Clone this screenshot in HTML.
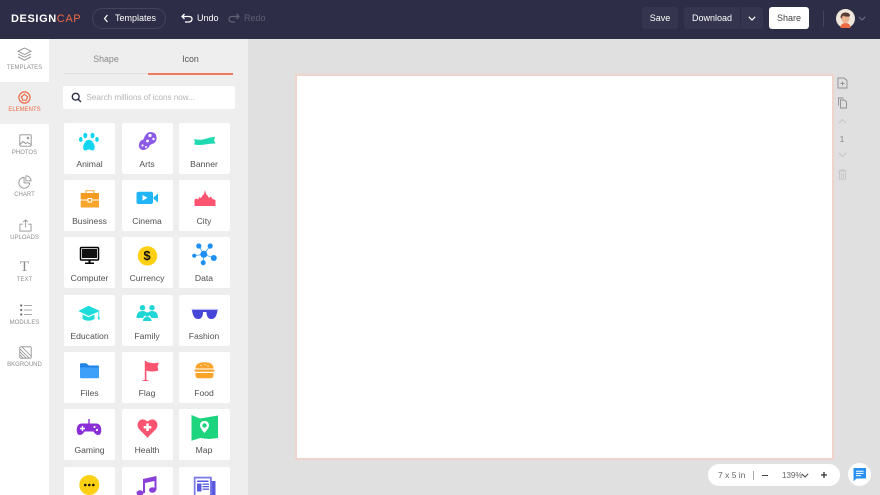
<!DOCTYPE html>
<html><head><meta charset="utf-8"><style>
*{box-sizing:border-box}
html,body{margin:0;padding:0;width:880px;height:495px;overflow:hidden;background:#e0e0e0;font-family:"Liberation Sans",sans-serif}
#root{position:absolute;left:0;top:0;width:880px;height:495px;overflow:hidden;background:#e0e0e0}
.a{position:absolute}
.t{position:absolute;white-space:nowrap;text-align:center}
#top{left:0;top:0;width:880px;height:39px;background:#2d2d47}
.btn{position:absolute;top:7px;height:22px;background:#35354f;border-radius:3px;color:#fff;font-size:9px;line-height:22px;text-align:center}
.nav{position:absolute;left:0;width:49px;text-align:center;font-size:6px;line-height:7px;color:#8f8f8f}
.tile{position:absolute;width:51px;height:51px;background:#fff;border-radius:2px}
.tile span{position:absolute;left:0;right:0;top:36px;text-align:center;font-size:8.6px;color:#505050;line-height:11px}
.tile svg{position:absolute;left:8px;top:6px}
#list{position:absolute;left:0;top:0;width:248px;height:495px;overflow:hidden}
</style></head><body><div id="root">
<div class="a" id="top"></div>
<div class="t" style="left:11px;top:11px;font-size:11px;font-weight:bold;letter-spacing:.6px;color:#fff;line-height:16px">DESIGN<span style="color:#ee6a45;font-weight:normal">CAP</span></div>
<div class="a" style="left:92px;top:8px;width:74px;height:21px;border:1px solid #43435c;border-radius:11px"></div>
<svg class="a" style="left:103px;top:14px" width="6" height="9" viewBox="0 0 6 9"><path d="M4.5 1L1.5 4.5L4.5 8" fill="none" stroke="#fff" stroke-width="1.2"/></svg>
<div class="t" style="left:115px;top:13px;font-size:9px;color:#fff;line-height:11px">Templates</div>
<svg class="a" style="left:181px;top:13px" width="12" height="11" viewBox="0 0 12 11"><path d="M1 3.5H8Q11 3.5 11 6T8 9H4M3.5 1L1 3.5L3.5 6" fill="none" stroke="#fff" stroke-width="1.3"/></svg>
<div class="t" style="left:197px;top:13px;font-size:9px;color:#fff;line-height:11px">Undo</div>
<svg class="a" style="left:228px;top:13px" width="12" height="11" viewBox="0 0 12 11"><path d="M11 3.5H4Q1 3.5 1 6T4 9H7M8.5 1L11 3.5L8.5 6" fill="none" stroke="#5f5f74" stroke-width="1.3"/></svg>
<div class="t" style="left:244px;top:13px;font-size:9px;color:#5f5f74;line-height:11px">Redo</div>
<div class="btn" style="left:642px;width:36px">Save</div>
<div class="btn" style="left:684px;width:56px;border-radius:3px 0 0 3px">Download</div>
<div class="btn" style="left:741px;width:22px;border-radius:0 3px 3px 0"></div>
<svg class="a" style="left:748px;top:16px" width="8" height="5" viewBox="0 0 8 5"><path d="M.8 .8L4 4L7.2 .8" fill="none" stroke="#fff" stroke-width="1.2"/></svg>
<div class="btn" style="left:769px;width:40px;background:#fff;color:#444">Share</div>
<div class="a" style="left:823px;top:11px;width:1px;height:16px;background:#45455d"></div>
<svg class="a" style="left:836px;top:9px" width="19" height="19" viewBox="0 0 19 19"><circle cx="9.5" cy="9.5" r="9.5" fill="#efe6dc"/><path d="M4.5 19Q4.5 14 9.5 14T14.5 19Z" fill="#ee6a45"/><circle cx="9.5" cy="10" r="4" fill="#e9b48f"/><path d="M4.5 8Q5 3.5 9.5 3.5T14 7L13.5 7.5Q9 8 7 6.5Q6 8 5.5 10Z" fill="#5a3d32"/></svg>
<svg class="a" style="left:858px;top:16px" width="8" height="5" viewBox="0 0 8 5"><path d="M.8 .8L4 4L7.2 .8" fill="none" stroke="#74748a" stroke-width="1"/></svg>

<div class="a" style="left:0;top:39px;width:49px;height:456px;background:#fff"></div>
<div class="a" style="left:49px;top:39px;width:199px;height:456px;background:#eee"></div>
<div class="a" style="left:0;top:82px;width:50px;height:42px;background:#eee"></div>

<svg class="a" style="left:17px;top:47px" width="15" height="15" viewBox="0 0 15 15" fill="none" stroke="#8f8f8f" stroke-width=".9"><path d="M7.5 1L14 4.3L7.5 7.5L1 4.3Z"/><path d="M1 7L7.5 10.3L14 7"/><path d="M1 9.8L7.5 13.2L14 9.8"/></svg>
<div class="nav" style="top:64.5px">TEMPLATES</div>
<svg class="a" style="left:18px;top:91px" width="13" height="13" viewBox="0 0 13 13" fill="none" stroke="#ee6a45" stroke-width="1.2"><circle cx="6.5" cy="6.5" r="5.6"/><path d="M6.5 3.3L9.5 5.7L8.4 9.2H4.6L3.5 5.7Z"/></svg>
<div class="nav" style="top:107px;color:#ee6a45">ELEMENTS</div>
<svg class="a" style="left:18.5px;top:133.5px" width="13" height="13" viewBox="0 0 13 13" fill="none" stroke="#8f8f8f" stroke-width=".9"><rect x=".8" y=".8" width="11.4" height="11.4" rx="1"/><path d="M1 10.5L4 7.5L6.5 9.5L8.5 8.5L12 10.5"/><circle cx="9" cy="4" r=".8"/></svg>
<div class="nav" style="top:149.5px">PHOTOS</div>
<svg class="a" style="left:18px;top:174.5px" width="14" height="14" viewBox="0 0 15 15" fill="none" stroke="#8f8f8f" stroke-width=".9"><path d="M6.5 2.5A5.8 5.8 0 1 0 12.5 8.5H6.5Z"/><path d="M8.5 .8A5.5 5.5 0 0 1 14 6.3H8.5Z"/></svg>
<div class="nav" style="top:191.5px">CHART</div>
<svg class="a" style="left:19px;top:218.5px" width="13" height="13" viewBox="0 0 14 14" fill="none" stroke="#8f8f8f" stroke-width=".9"><path d="M4.5 5.5H1V13H13V5.5H9.5"/><path d="M7 9V1M4.5 3.3L7 1L9.5 3.3"/></svg>
<div class="nav" style="top:234.5px">UPLOADS</div>
<div class="a" style="left:0;width:49px;top:259px;text-align:center;font-family:'Liberation Serif',serif;font-size:15px;line-height:17px;color:#8a8a8a">T</div>
<div class="nav" style="top:276.5px">TEXT</div>
<svg class="a" style="left:19.5px;top:304px" width="12" height="12" viewBox="0 0 12 12" stroke="#8f8f8f" stroke-width=".8"><path d="M4 1.5H12M4 6H12M4 10.5H12"/><circle cx="1.2" cy="1.5" r=".8"/><circle cx="1.2" cy="6" r=".8"/><circle cx="1.2" cy="10.5" r=".8"/></svg>
<div class="nav" style="top:319.5px">MODULES</div>
<svg class="a" style="left:18.5px;top:346px" width="13" height="13" viewBox="0 0 13 13" fill="none" stroke="#8a8a8a" stroke-width=".8"><rect x=".8" y=".8" width="11.4" height="11.4" rx="1"/><path d="M1 3L10 12M1 6L7 12M1 9L4 12M3 1L12 10"/></svg>
<div class="nav" style="top:361.5px">BKGROUND</div>

<div class="t" style="left:64px;top:54px;width:84px;font-size:8.8px;color:#888;line-height:11px">Shape</div>
<div class="t" style="left:148px;top:54px;width:85px;font-size:8.8px;color:#555;line-height:11px">Icon</div>
<div class="a" style="left:64px;top:73px;width:84px;height:1px;background:#e0e0e0"></div>
<div class="a" style="left:148px;top:73px;width:85px;height:2px;background:#ee7a5e"></div>
<div class="a" style="left:63px;top:86px;width:172px;height:23px;background:#fff;border-radius:2px"></div>
<svg class="a" style="left:71px;top:92px" width="11" height="11" viewBox="0 0 11 11" fill="none" stroke="#2d2d47" stroke-width="1.4"><circle cx="4.7" cy="4.7" r="3.4"/><path d="M7.2 7.2L10 10"/></svg>
<div class="t" style="left:86.5px;top:92px;font-size:8.1px;color:#b5b5b5;line-height:11px">Search millions of icons now...</div>

<div id="list">
<div class="tile" style="left:64px;top:123px"><svg width="35" height="30" viewBox="0 0 35 30" fill="#12d5f0"><ellipse cx="8.8" cy="10.5" rx="1.8" ry="2.5"/><ellipse cx="13.3" cy="6.5" rx="2" ry="2.8"/><ellipse cx="20.5" cy="6.5" rx="2" ry="2.8"/><ellipse cx="25" cy="10.5" rx="1.8" ry="2.5"/><path d="M16.9 10.8Q20.5 10.8 22.5 16.5Q23.5 21.5 20 21.5Q18.5 20.5 16.9 20.5Q15.3 20.5 13.8 21.5Q10.3 21.5 11.3 16.5Q13.3 10.8 16.9 10.8Z"/></svg><span>Animal</span></div>
<div class="tile" style="left:121.5px;top:123px"><svg width="35" height="30" viewBox="0 0 35 30"><path d="M20 3Q27 3 26.5 10Q26 14 22 15Q19.5 16 18.5 18.5Q15 22 11 20.5Q7.5 18 9.5 13.5Q11 11 13.5 10.5Q15.5 3.5 20 3Z" fill="#8b5be8"/><g fill="#fff"><circle cx="20" cy="6.5" r="1.6"/><circle cx="23.5" cy="10" r="1.2"/><circle cx="17.5" cy="12" r="1.4"/><circle cx="12.5" cy="16.5" r="1.1"/><circle cx="16" cy="18" r="1"/></g></svg><span>Arts</span></div>
<div class="tile" style="left:178.5px;top:123px"><svg width="35" height="30" viewBox="0 0 35 30"><path d="M7 10Q13 11.5 18 10Q24 8 28 8L27 11.5L28.5 14.5Q23 14.5 18 15.5Q12 16.5 7 15.5L8 13Z" fill="#1fd9b0"/></svg><span>Banner</span></div>

<div class="tile" style="left:64px;top:180px"><svg width="35" height="30" viewBox="0 0 35 30"><path d="M14 7V4.7H22V7" fill="none" stroke="#f8b04c" stroke-width="1.2"/><rect x="8.7" y="7" width="18.3" height="6.5" fill="#f39c20"/><rect x="8.7" y="14.5" width="18.3" height="7" fill="#f8a52c"/><rect x="15.5" y="12" width="4.6" height="4.5" fill="#fff"/><rect x="16.5" y="13" width="2.6" height="2.5" fill="#f39c20"/></svg><span>Business</span></div>
<div class="tile" style="left:121.5px;top:180px"><svg width="35" height="30" viewBox="0 0 35 30"><rect x="6.5" y="5.7" width="16.5" height="12.3" rx="2" fill="#20b5f5"/><path d="M23.5 11.5L28 7.5V16.5L23.5 12.8Z" fill="#20b5f5"/><path d="M12.5 9L17.5 11.8L12.5 14.7Z" fill="#fff"/></svg><span>Cinema</span></div>
<div class="tile" style="left:178.5px;top:180px"><svg width="35" height="30" viewBox="0 0 35 30"><path d="M7.5 20V13.5L9.5 12.5L11 13.5L12.5 11L14 12L15.5 9.5L17 8L18 4L19 8L20.5 9.5L22 12L24 10.5L25.5 13L28.5 14V20Z" fill="#fb5470"/></svg><span>City</span></div>

<div class="tile" style="left:64px;top:237px"><svg width="35" height="30" viewBox="0 0 35 30"><rect x="8.5" y="4.5" width="18" height="12.5" rx="1" fill="#fff" stroke="#000" stroke-width="1.5"/><rect x="10" y="6" width="15" height="9" fill="#111"/><path d="M16.5 17.5H18.5V19.5H22V21H13V19.5H16.5Z" fill="#000"/></svg><span>Computer</span></div>
<div class="tile" style="left:121.5px;top:237px"><svg width="35" height="30" viewBox="0 0 35 30"><circle cx="17.5" cy="12.9" r="9.7" fill="#fed014"/></svg><b style="position:absolute;left:0;right:0;top:11.5px;text-align:center;font-size:13px;line-height:14px;color:#111">$</b><span>Currency</span></div>
<div class="tile" style="left:178.5px;top:237px"><svg width="35" height="30" viewBox="0 0 35 30"><g stroke="#4aa5f0" stroke-width=".8"><path d="M16.8 11.3L11.8 3M16.8 11.3L23.2 3M16.8 11.3L26.8 15M16.8 11.3L7.2 12.7M16.8 11.3L16.2 19.7"/></g><g fill="#1e90f5"><circle cx="16.8" cy="11.3" r="3.5"/><circle cx="11.8" cy="3" r="2.6"/><circle cx="23.2" cy="3" r="2.6"/><circle cx="26.8" cy="15" r="3"/><circle cx="7.2" cy="12.7" r="2.1"/><circle cx="16.2" cy="19.7" r="2.5"/></g></svg><span>Data</span></div>

<div class="tile" style="left:64px;top:295px"><svg width="35" height="30" viewBox="0 0 35 30" fill="#1fdcdc"><path d="M16.5 4.7L28 10L16.5 15L6.3 10Z"/><path d="M10.5 13.5L16.5 16.2L22.5 13.5V18Q16.5 21.5 10.5 18Z"/><rect x="26.3" y="11" width=".9" height="6"/><rect x="26" y="16" width="1.7" height="2.5"/></svg><span>Education</span></div>
<div class="tile" style="left:121.5px;top:295px"><svg width="35" height="30" viewBox="0 0 35 30" fill="#20d5d5"><circle cx="12.5" cy="6.7" r="2.7"/><circle cx="22" cy="6.7" r="2.7"/><path d="M6.5 17Q6.5 10 12.5 10Q15.5 10 16.5 12L13 17Z"/><path d="M28 17Q28 10 22 10Q19 10 18 12L21.5 17Z"/><circle cx="17.2" cy="13.5" r="2.3"/><path d="M13 20Q13 16 17.2 16T21.5 20Z"/></svg><span>Family</span></div>
<div class="tile" style="left:178.5px;top:295px"><svg width="35" height="30" viewBox="0 0 35 30"><path d="M4.5 8.5H31" stroke="#c0bbf2" stroke-width="1.2"/><path d="M5 9H16Q16.5 18 11 18Q6 18 5 9ZM19.5 9H30.5Q29.5 18 24.5 18Q19 18 19.5 9Z" fill="#4646d8"/><rect x="15.5" y="9" width="4.5" height="2" fill="#4646d8"/></svg><span>Fashion</span></div>

<div class="tile" style="left:64px;top:352px"><svg width="35" height="30" viewBox="0 0 35 30"><path d="M8 6.5Q8 5.3 9 5.3H14L17 7.5H26Q27 7.5 27 8.5V11H8Z" fill="#1f85e5"/><path d="M8 9.5H27V19Q27 20.3 26 20.3H9Q8 20.3 8 19Z" fill="#3fa0fa"/></svg><span>Files</span></div>
<div class="tile" style="left:121.5px;top:352px"><svg width="35" height="30" viewBox="0 0 35 30" fill="#fb5470"><rect x="14.8" y="3" width="1.6" height="19"/><path d="M11.5 23Q15.5 20.5 19.5 23Z"/><path d="M16 3.5Q19 5 22 5Q25 5.5 28.8 4.5L27.5 9L28.5 12.5Q22 14.5 16 12.5Z"/></svg><span>Flag</span></div>
<div class="tile" style="left:178.5px;top:352px"><svg width="35" height="30" viewBox="0 0 35 30"><path d="M8.5 10.5Q8.5 4.3 17.5 4.3T26.5 10.5Z" fill="#f9a32a"/><rect x="7.5" y="11.5" width="20" height="2.3" rx="1" fill="#f9a32a"/><path d="M8.5 15H26.5V17Q26.5 20.3 23.5 20.3H11.5Q8.5 20.3 8.5 17Z" fill="#f9a32a"/><g fill="#fff"><circle cx="14" cy="7.5" r=".6"/><circle cx="18" cy="6.5" r=".6"/><circle cx="21" cy="8" r=".6"/></g></svg><span>Food</span></div>

<div class="tile" style="left:64px;top:409px"><svg width="35" height="30" viewBox="0 0 35 30"><path d="M17 4V9" stroke="#8a2fd8" stroke-width="1.4"/><path d="M10 8.5H24Q29 8.5 29.3 15Q29.3 20 26 20Q23.5 20 21.5 16.5H12.5Q10.5 20 8 20Q4.7 20 4.7 15Q5 8.5 10 8.5Z" fill="#8a2fd8"/><path d="M10.5 11V16M8 13.5H13" stroke="#fff" stroke-width="1.4"/><circle cx="22.5" cy="12" r="1.1" fill="#fff"/><circle cx="25" cy="15" r="1.1" fill="#fff"/></svg><span>Gaming</span></div>
<div class="tile" style="left:121.5px;top:409px"><svg width="35" height="30" viewBox="0 0 35 30"><path d="M17.5 22.7L9 14Q6 10 9 6Q12.5 2.5 17.5 6.5Q22.5 2.5 26 6Q29 10 26 14Z" fill="#fb5470"/><path d="M17.5 8.5V16M13.7 12.2H21.3" stroke="#fff" stroke-width="2.5"/></svg><span>Health</span></div>
<div class="tile" style="left:178.5px;top:409px"><svg width="35" height="30" viewBox="0 0 35 30"><path d="M4.5 0L13 3.5L22 2L31 .5V23L22 24L13 23L4.5 25.7Z" fill="#1dd47f"/><path d="M17.5 6Q22 6 22 10.5Q22 13 17.5 18Q13 13 13 10.5Q13 6 17.5 6Z" fill="#fff"/><circle cx="17.5" cy="10.5" r="2.2" fill="#1dd47f"/></svg><span>Map</span></div>

<div class="tile" style="left:64px;top:467px"><svg width="35" height="30" viewBox="0 0 35 30"><circle cx="17.3" cy="12" r="10" fill="#fed014"/><g fill="#111"><circle cx="13.3" cy="12" r="1.3"/><circle cx="17.3" cy="12" r="1.3"/><circle cx="21.3" cy="12" r="1.3"/></g></svg></div>
<div class="tile" style="left:121.5px;top:467px"><svg width="35" height="30" viewBox="0 0 35 30" fill="#8a3fd8"><path d="M13 6L26.5 3V17H24.5V8L15 10V20H13Z"/><ellipse cx="10" cy="20" rx="3.5" ry="2.8"/><ellipse cx="22.5" cy="17" rx="3.5" ry="2.8"/></svg></div>
<div class="tile" style="left:178.5px;top:467px"><svg width="35" height="30" viewBox="0 0 35 30"><rect x="22" y="8" width="6.5" height="17" fill="#5a5ae0"/><rect x="6.8" y="3.7" width="18" height="22" fill="#7a7ae8"/><rect x="8.5" y="5.5" width="14.5" height="18" fill="#fff"/><rect x="10" y="7.5" width="11.5" height="1.5" fill="#5a5ae0"/><rect x="10" y="10.5" width="4.5" height="8" fill="#5a5ae0"/><rect x="15.5" y="10.5" width="6.5" height="1.3" fill="#5a5ae0"/><rect x="15.5" y="13" width="6.5" height="1.3" fill="#5a5ae0"/><rect x="15.5" y="15.5" width="6.5" height="1.3" fill="#5a5ae0"/></svg></div>
</div>

<div class="a" style="left:295px;top:74px;width:539px;height:386px;background:#fff;border:2px solid #f0d3cb"></div>

<svg class="a" style="left:837px;top:77px" width="11" height="12" viewBox="0 0 11 12" fill="none" stroke="#8f8f8f" stroke-width=".9"><path d="M1 1H7L10 3.5V11H1Z"/><path d="M5.5 4.5V8.5M3.5 6.5H7.5"/></svg>
<svg class="a" style="left:837px;top:97px" width="11" height="12" viewBox="0 0 11 12" fill="none" stroke="#8f8f8f" stroke-width=".9"><path d="M1.5 8.5V1H6.5"/><path d="M3.5 3H7.5L9.5 5V11H3.5Z"/></svg>
<svg class="a" style="left:838px;top:118px" width="9" height="6" viewBox="0 0 9 6" fill="none" stroke="#c4c4c4" stroke-width=".9"><path d="M1 5L4.5 1.5L8 5"/></svg>
<div class="t" style="left:837px;top:134px;width:10px;font-size:8.5px;color:#888;line-height:11px">1</div>
<svg class="a" style="left:838px;top:152px" width="9" height="6" viewBox="0 0 9 6" fill="none" stroke="#c4c4c4" stroke-width=".9"><path d="M1 1L4.5 4.5L8 1"/></svg>
<svg class="a" style="left:838px;top:169px" width="9" height="11" viewBox="0 0 9 11" fill="none" stroke="#c4c4c4" stroke-width=".9"><path d="M.5 2H8.5M3 2V1H6V2M1.5 2V10H7.5V2M3.5 4V8.5M5.5 4V8.5"/></svg>

<div class="a" style="left:708px;top:464px;width:132px;height:22px;background:#fff;border-radius:11px"></div>
<div class="t" style="left:718px;top:470px;font-size:8.5px;color:#666;line-height:11px">7 x 5 in</div>
<div class="a" style="left:753px;top:471px;width:1px;height:9px;background:#aaa"></div>
<div class="a" style="left:762px;top:475px;width:6px;height:1.2px;background:#444"></div>
<div class="t" style="left:782px;top:470px;font-size:8px;color:#666;line-height:11px">139%</div>
<svg class="a" style="left:801px;top:473px" width="8" height="5" viewBox="0 0 8 5"><path d="M.8 .8L4 4L7.2 .8" fill="none" stroke="#444" stroke-width="1"/></svg>
<svg class="a" style="left:820px;top:471px" width="8" height="8" viewBox="0 0 8 8"><path d="M4 1V7M1 4H7" stroke="#333" stroke-width="1.3"/></svg>
<div class="a" style="left:848px;top:463px;width:23px;height:23px;background:#fff;border-radius:50%"></div>
<svg class="a" style="left:852px;top:467px" width="15" height="15" viewBox="0 0 15 15"><path d="M2 1H13.5Q14 1 14 1.5V11Q14 11.5 13.5 11.5H4.5L1.5 14.3V1.5Q1.5 1 2 1Z" fill="#2a90f0"/><path d="M4 4.2H11.5M4 6.4H11.5M4 8.6H9" stroke="#fff" stroke-width="1"/></svg>
</div></body></html>
